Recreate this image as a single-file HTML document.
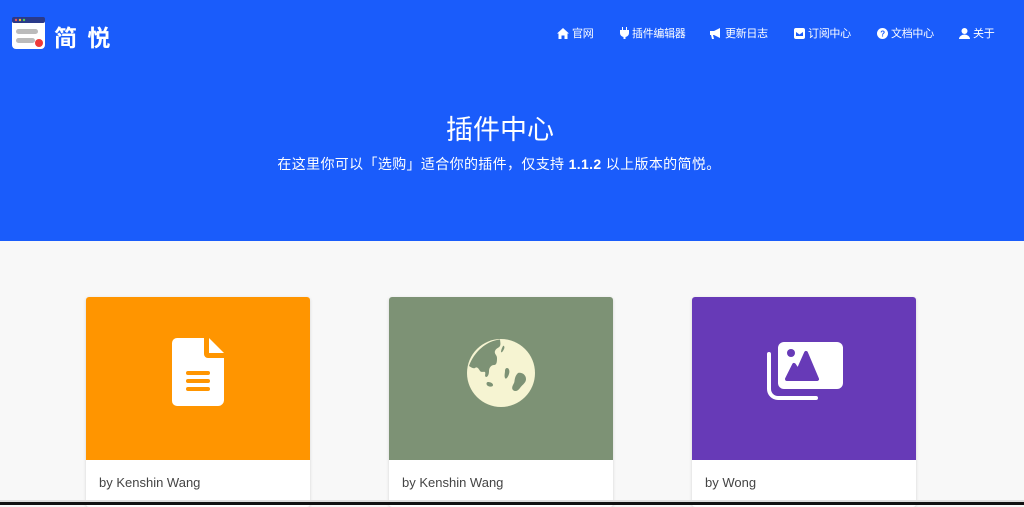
<!DOCTYPE html>
<html><head><meta charset="utf-8"><style>
*{margin:0;padding:0;box-sizing:border-box}
body{width:1024px;height:505px;overflow:hidden;background:#f8f8f8;font-family:"Liberation Sans","Noto Sans CJK SC",sans-serif;position:relative}
.hd{position:absolute;left:0;top:0;width:1024px;height:241px;background:#1a5cfb;color:#fff}
.logo{position:absolute;left:12px;top:16px}
.brand{position:absolute;left:54px;top:19px;font-size:23px;font-weight:bold;letter-spacing:2px}
.nav{position:absolute;top:25px;font-size:11px;display:flex;align-items:center;gap:3px;letter-spacing:-0.3px}
.nav svg{fill:#fff}
h1{position:absolute;top:108px;left:0;width:1000px;text-align:center;font-weight:normal;font-size:27px}
.sub{position:absolute;top:154px;left:0;width:998px;text-align:center;font-size:14px;letter-spacing:0.35px}
.card{position:absolute;top:297px;width:224px;height:210px;background:#fff;border-radius:3px;overflow:hidden;box-shadow:0 1px 3px rgba(0,0,0,.15)}
.card .top{height:163px;position:relative}
.card .by{padding:15px 13px;font-size:13px;color:#444}
.card svg{position:absolute}
.foot{position:absolute;left:0;top:500px;width:1024px;height:2px;background:#ddd}
.blk{position:absolute;left:0;top:502px;width:1024px;height:3px;background:#111}
</style></head><body>
<div class="hd">
<svg class="logo" width="34" height="34" viewBox="0 0 34 34"><rect x="0" y="1" width="33" height="32" rx="4" fill="#fff"/><rect x="0" y="1" width="33" height="6" rx="2" fill="#2a3a8a"/><circle cx="4" cy="4" r="1.2" fill="#e55"/><circle cx="8" cy="4" r="1.2" fill="#eb3"/><circle cx="12" cy="4" r="1.2" fill="#5c5"/><rect x="4" y="13" width="22" height="5" rx="2.5" fill="#bbb"/><rect x="4" y="22" width="19" height="5" rx="2.5" fill="#bbb"/><circle cx="27" cy="27" r="4" fill="#ee3a3a"/></svg>
<div class="brand">简 悦</div>
<div class="nav" style="left:557px"><svg width="12" height="11" viewBox="0 0 12 11"><path d="M6 0L0 5.5h1.5V11h3V7.5h3V11h3V5.5H12z"/></svg>官网</div>
<div class="nav" style="left:620px"><svg width="9" height="12" viewBox="0 0 9 12"><path d="M2 0h1v3h3V0h1v3h2v3a4 4 0 0 1-3.5 4V12h-2v-2A4 4 0 0 1 0 6V3h2z"/></svg>插件编辑器</div>
<div class="nav" style="left:710px"><svg width="12" height="11" viewBox="0 0 12 11"><path d="M0 3h4l6-3v10L4 7H3l1 4H2L1 7H0z"/></svg>更新日志</div>
<div class="nav" style="left:794px"><svg width="11" height="11" viewBox="0 0 11 11"><rect x="0" y="0" width="11" height="11" rx="2"/><path d="M2 4l3.5 2.5L9 4v4H2z" fill="#1a5cfb"/></svg>订阅中心</div>
<div class="nav" style="left:877px"><svg width="11" height="11" viewBox="0 0 11 11"><circle cx="5.5" cy="5.5" r="5.5"/><text x="5.5" y="8.5" font-size="8" text-anchor="middle" fill="#1a5cfb" font-weight="bold">?</text></svg>文档中心</div>
<div class="nav" style="left:959px"><svg width="11" height="11" viewBox="0 0 11 11"><circle cx="5.5" cy="3" r="3"/><path d="M0 11a5.5 4.5 0 0 1 11 0z"/></svg>关于</div>
<h1>插件中心</h1>
<div class="sub">在这里你可以「选购」适合你的插件，仅支持 <b>1.1.2</b> 以上版本的简悦。</div>
</div>
<div class="card" style="left:86px"><div class="top" style="background:#ff9500"><svg style="left:86px;top:41px" width="52" height="68" viewBox="0 0 52 68"><path d="M5 0h27v16a4 4 0 0 0 4 4h16v42a6 6 0 0 1-6 6H5a5 5 0 0 1-5-5V5a5 5 0 0 1 5-5zM37 0l15 15H37z" fill="#fff"/><rect x="14" y="33" width="24" height="4" rx="2" fill="#ff9500"/><rect x="14" y="41" width="24" height="4" rx="2" fill="#ff9500"/><rect x="14" y="49" width="24" height="4" rx="2" fill="#ff9500"/></svg></div><div class="by">by Kenshin Wang</div></div>
<div class="card" style="left:389px"><div class="top" style="background:#7d9275"><svg style="left:77px;top:41px" width="70" height="70" viewBox="0 0 70 70"><circle cx="35" cy="35" r="34" fill="#f6f4d2"/><path d="M34 1.5C20 3 8 14 3 28c2 1 4 3 6 2 2-2 4 1 5 3 2 2 4 0 5 1 1 2-1 4 1 5 2 0 3-3 3-6 0-3 2-6 5-6 3 0 3-4 3-7s-3-4-2-7c1-3 4-3 5-5 1-2 0-5 0-7zM37 8c1-1 2 1 1 3-1 2-2 4-3 3 0-2 1-4 2-6zM41 30c2 0 3 3 2 6s-3 6-4 4 0-5 0-7 1-3 2-3zM52 35c4-1 8 2 8 6s-4 6-6 9-5 4-7 2 0-5 1-7 0-6 4-10zM22 44c2 0 5 1 5 3s-3 2-5 1-2-4 0-4z" fill="#7d9275"/></svg></div><div class="by">by Kenshin Wang</div></div>
<div class="card" style="left:692px"><div class="top" style="background:#673ab7"><svg style="left:74px;top:45px" width="78" height="60" viewBox="0 0 78 60"><path d="M3 12v35a9 9 0 0 0 9 9h38" stroke="#fff" stroke-width="4" fill="none" stroke-linecap="round"/><rect x="12" y="0" width="65" height="47" rx="6" fill="#fff"/><circle cx="25" cy="11" r="4" fill="#673ab7"/><path d="M21 37l7-14 4 6 8-18 11 26z" fill="#673ab7" stroke="#673ab7" stroke-width="4" stroke-linejoin="round"/></svg></div><div class="by">by Wong</div></div>
<div class="foot"></div><div class="blk"></div>
</body></html>
